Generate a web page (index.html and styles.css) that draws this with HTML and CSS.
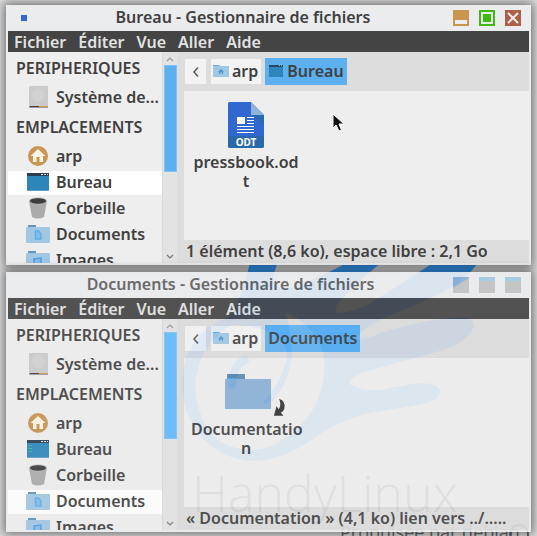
FILE: index.html
```html
<!DOCTYPE html>
<html lang="fr">
<head>
<meta charset="utf-8">
<title>Bureau - Gestionnaire de fichiers</title>
<link rel="stylesheet" href="styles.css">
</head>
<body>
<svg class="defs" aria-hidden="true">
  <symbol id="drive" viewBox="0 0 24 24">
    <rect x="3" y="1" width="19" height="22" rx="1" fill="#cbcbcb"/>
    <circle cx="12" cy="10" r="6.500" fill="#d1d1d1"/>
    <path d="M3 21h19v1a1 1 0 0 1-1 1H4a1 1 0 0 1-1-1z" fill="#9a9a9a"/>
    <path d="M4 21h9v1H4z" fill="#4a3a36"/><path d="M13 21h8v1h-8z" fill="#dc9a48"/>
  </symbol>
  <symbol id="home" viewBox="0 0 24 24">
    <circle cx="12" cy="12" r="10" fill="#c99552"/>
    <path d="M12 5l7.500 7H17v6h-3.500v-5h-3v5H7v-6H4.500z" fill="#fbf3e4"/>
  </symbol>
  <symbol id="desk" viewBox="0 0 24 24">
    <path d="M1 3h22v18H1z" fill="#2d86ba"/><path d="M1 3h22v3H1z" fill="#2b3d52"/>
    <path d="M15 4h2v1h-2zM18 4h2v1h-2zM21 4h1v1h-1z" fill="#dfeaf2"/><path d="M1 20h22v1H1z" fill="#5a9fcb"/>
  </symbol>
  <symbol id="terminal" viewBox="0 0 24 24">
    <use href="#desk"/><path d="M3 8h3v1H3zM3 11h3v1H3zM3 14h3v1H3z" fill="#2fc0a8"/>
  </symbol>
  <symbol id="bin" viewBox="0 0 24 24">
    <path d="M3 5l3 16q6 3 12 0l3-16z" fill="#aaabaa"/><ellipse cx="12" cy="5" rx="9" ry="3.500" fill="#b4b5b4"/>
    <ellipse cx="12" cy="5" rx="8" ry="2.700" fill="#3c3c3c"/>
  </symbol>
  <symbol id="folder" viewBox="0 0 24 24">
    <path d="M2 3h8v3H2z" fill="#6595bc"/><path d="M1 5h22a1 1 0 0 1 1 1v14a1 1 0 0 1-1 1H1a1 1 0 0 1-1-1V6a1 1 0 0 1 1-1z" fill="#a1c8e2"/>
  </symbol>
  <symbol id="docs" viewBox="0 0 24 24">
    <use href="#folder"/><path d="M9.500 9h3l2.500 3v5H9.500z" fill="#86bbe8" stroke="#5aaeee" stroke-width="1.500"/>
  </symbol>
  <symbol id="pics" viewBox="0 0 24 24">
    <use href="#folder"/><path d="M8 11l7-1v7H8z" fill="#86bbe8" stroke="#4c9de2" stroke-width="1.500"/>
  </symbol>
  <symbol id="homefolder" viewBox="0 0 16 14">
    <path d="M0 2h16v11H0z" fill="#a1c8e2"/><path d="M0 1h6l1 1H0z" fill="#62aee8"/>
    <path d="M8 5l3 3h-1v2H9V8.500H7V10H6V8H5z" fill="#4a92d2"/>
  </symbol>
  <symbol id="up" viewBox="0 0 10 6"><path d="M2 5l3-3 3 3" fill="none" stroke="#999" stroke-width="1.200"/></symbol>
  <symbol id="down" viewBox="0 0 10 6"><path d="M2 1l3 3 3-3" fill="none" stroke="#777" stroke-width="1.200"/></symbol>
  <symbol id="back" viewBox="0 0 10 14"><path d="M7 2.500L3 7l4 4.500" fill="none" stroke="#5c5c5c" stroke-width="1.600"/></symbol>
</svg>

<div class="desktop">
  <svg class="wallpaper" viewBox="0 0 537 536" aria-hidden="true">
    <path fill="#3a9eff" fill-rule="evenodd" d="M250 262L278 262Q272 276 274 283Q280 292 298 286Q322 276 349 262L382 262C366 275 348 291 337 305Q333 314 342 313Q358 310 374 301L430 265L478 262Q468 280 435 296L385 318Q362 328 356 339Q364 341 380 333Q425 319 462 317Q476 318 473 329Q466 343 440 351L382 367Q350 375 349 383Q356 391 380 390L412 384Q436 381 440 391Q439 401 422 404L365 414Q335 422 310 441Q281 461 250 461Q219 458 200 435Q182 412 182 382Q184 332 231 316Q244 292 250 262ZM232 325Q198 345 195 385Q197 425 222 443Q248 455 272 446Q302 430 316 404Q328 378 323 352Q315 326 285 312Q292 330 292 357Q288 385 272 401L262 404Q282 382 287 357Q286 327 232 325Z"/>
    <path fill="none" stroke="#3a9eff" stroke-width="8" stroke-linecap="round" d="M245 360Q233 365 232 385"/>
    <text class="brand" x="192" y="512">HandyLinux</text>
    <text class="tagline" x="340" y="539">Propulsée par debian</text>
    <circle cx="519" cy="534" r="9" fill="none" stroke="#666" stroke-width="2"/>
  </svg>

  <section class="shell">
    <div class="window">
      <header class="titlebar">
        <span class="pin"></span>
        <h1 class="title">Bureau - Gestionnaire de fichiers</h1>
        <div class="controls">
          <button class="ctl" aria-label="Réduire"><svg viewBox="0 0 16 16"><path fill="#c9954f" d="M0 0h16v16H0z"/><path fill="#ebecee" d="M2 10h12v4H2z"/></svg></button>
          <button class="ctl" aria-label="Agrandir"><svg viewBox="0 0 16 16"><path fill="#3fba13" d="M0 0h16v16H0z"/><path fill="#ebecee" d="M2 2h12v12H2z"/><path fill="#3fba13" d="M4 4h8v8H4z"/></svg></button>
          <button class="ctl" aria-label="Fermer"><svg viewBox="0 0 16 16"><path fill="#ad5f47" d="M0 0h16v16H0z"/><path stroke="#ebecee" stroke-width="2" d="M3 3l10 10M13 3L3 13"/></svg></button>
        </div>
      </header>
      <nav class="menubar">
        <button>Fichier</button><button>Éditer</button><button>Vue</button><button>Aller</button><button>Aide</button>
      </nav>
      <div class="body">
        <nav class="sidebar">
          <h2>PERIPHERIQUES</h2>
          <a href="#"><svg><use href="#drive"/></svg>Système de...</a>
          <h2>EMPLACEMENTS</h2>
          <a href="#"><svg><use href="#home"/></svg>arp</a>
          <a href="#" class="current"><svg><use href="#desk"/></svg>Bureau</a>
          <a href="#"><svg><use href="#bin"/></svg>Corbeille</a>
          <a href="#"><svg><use href="#docs"/></svg>Documents</a>
          <a href="#"><svg><use href="#pics"/></svg>Images</a>
        </nav>
        <div class="scroll">
          <button aria-label="Monter"><svg><use href="#up"/></svg></button>
          <div class="track"><div class="thumb"></div></div>
          <button aria-label="Descendre"><svg><use href="#down"/></svg></button>
        </div>
        <main class="content">
          <div class="toolbar">
            <button class="back" aria-label="Précédent"><svg><use href="#back"/></svg></button>
            <button class="crumb"><svg><use href="#homefolder"/></svg>arp</button>
            <button class="crumb active"><svg viewBox="0 0 16 14"><path fill="#2d86ba" d="M1 1h14v12H1z"/><path fill="#27485f" d="M1 1h14v2H1z"/><path fill="#9ac0d8" d="M11 1h1v1h-1zM13 1h1v1h-1z"/></svg>Bureau</button>
          </div>
          <div class="files">
            <figure class="file">
              <svg class="art" viewBox="0 0 50 50">
                <path fill="#3168cf" d="M8 2h22l13 13v31a2 2 0 0 1-2 2H9a2 2 0 0 1-2-2V3z"/>
                <path fill="#2a6bb0" d="M31 15h12v11z"/><path fill="#8fb3d9" d="M30 2l13 13H30z"/>
                <path fill="#2969ab" d="M7 36h36v10a2 2 0 0 1-2 2H9a2 2 0 0 1-2-2z"/>
                <path fill="#fff" d="M16 17h8v7h-8zM26 17h7v1h-7zM26 20h7v1h-7zM26 23h7v1h-7zM16 26h17v1H16zM16 29h17v1H16zM16 32h17v1H16z"/>
                <text class="badge" x="25" y="46">ODT</text>
              </svg>
              <figcaption>pressbook.od<wbr>t</figcaption>
            </figure>
          </div>
          <footer class="status">1 élément (8,6 ko), espace libre : 2,1 Go</footer>
        </main>
      </div>
    </div>
  </section>

  <section class="shell">
    <div class="window idle">
      <header class="titlebar">
        <h1 class="title">Documents - Gestionnaire de fichiers</h1>
        <div class="controls">
          <button class="ctl" aria-label="Réduire"><svg viewBox="0 0 16 16"><path fill="#c3c3c3" d="M0 0h16v16H0z"/><path fill="#8db2d6" d="M0 0h16v1L0 11z"/></svg></button>
          <button class="ctl" aria-label="Agrandir"><svg viewBox="0 0 16 16"><path fill="#c3c3c3" d="M0 0h16v16H0z"/><path fill="#a1cae3" d="M0 0h16v4H0z"/></svg></button>
          <button class="ctl" aria-label="Fermer"><svg viewBox="0 0 16 16"><path fill="#c3c3c3" d="M0 0h16v16H0z"/><path fill="#a1cae3" d="M0 0h16v4H0z"/></svg></button>
        </div>
      </header>
      <nav class="menubar">
        <button>Fichier</button><button>Éditer</button><button>Vue</button><button>Aller</button><button>Aide</button>
      </nav>
      <div class="body">
        <nav class="sidebar">
          <h2>PERIPHERIQUES</h2>
          <a href="#"><svg><use href="#drive"/></svg>Système de...</a>
          <h2>EMPLACEMENTS</h2>
          <a href="#"><svg><use href="#home"/></svg>arp</a>
          <a href="#"><svg><use href="#terminal"/></svg>Bureau</a>
          <a href="#"><svg><use href="#bin"/></svg>Corbeille</a>
          <a href="#" class="current"><svg><use href="#docs"/></svg>Documents</a>
          <a href="#"><svg><use href="#pics"/></svg>Images</a>
        </nav>
        <div class="scroll">
          <button aria-label="Monter"><svg><use href="#up"/></svg></button>
          <div class="track"><div class="thumb"></div></div>
          <button aria-label="Descendre"><svg><use href="#down"/></svg></button>
        </div>
        <main class="content">
          <div class="toolbar">
            <button class="back" aria-label="Précédent"><svg><use href="#back"/></svg></button>
            <button class="crumb"><svg><use href="#homefolder"/></svg>arp</button>
            <button class="crumb active">Documents</button>
          </div>
          <div class="files">
            <figure class="file">
              <svg class="art" viewBox="0 0 50 50">
                <path fill="#6089ae" d="M6 7h18v5H6z"/><path fill="#58a8ec" d="M7 11h9v1H7z"/>
                <path fill="#8bb0d6" d="M4 12h46v30H4z"/>
              </svg>
              <svg class="link-mark" viewBox="0 0 16 20" aria-hidden="true"><path fill="#333" d="M7 0Q15 3 13 11Q12 15 9 16L12 19.500H1L4 8.500L6.500 12Q10 8 7 0z"/></svg>
              <figcaption>Documentatio<wbr>n</figcaption>
            </figure>
          </div>
          <footer class="status">« Documentation » (4,1 ko) lien vers ../.....</footer>
        </main>
      </div>
    </div>
  </section>

  <svg class="pointer" viewBox="0 0 14 20" aria-hidden="true"><path fill="#111" stroke="#fff" d="M1 1v14l3-3 3 6 2.500-1-2.500-6h5z"/></svg>
</div>
</body>
</html>
```
FILE: styles.css
```css
* { box-sizing: border-box; }

body {
  margin: 0;
  font: 600 16px/22px "Noto Sans", sans-serif;
  color: #404040;
}

button {
  display: flex;
  align-items: center;
  justify-content: center;
  margin: 0;
  padding: 0;
  border: 0;
  background: none;
  font: inherit;
  color: inherit;
}

.defs { position: absolute; width: 0; height: 0; }

.desktop {
  position: relative;
  display: flex;
  flex-direction: column;
  gap: 7px;
  height: 100vh;
  padding: 5px 6px 0;
  overflow: hidden;
  background: #dcdcdc;
}

.wallpaper {
  position: absolute;
  left: 0;
  top: 0;
  width: 537px;
  height: 536px;
}
.brand { font: 300 50px "Open Sans", sans-serif; fill: #555; }
.tagline { font: 400 18px "Open Sans", sans-serif; fill: #666; }

.shell { position: relative; flex: none; box-shadow: 0 0 9px 2px rgba(0, 0, 0, .5); }

.window {
  display: flex;
  flex-direction: column;
  padding: 0 2px 2px;
  background: #ebecee;
}
.window.idle { opacity: .9; background: #ecedef; }

.titlebar { display: flex; align-items: center; height: 26px; padding: 0 8px 0 13px; }
.pin { width: 6px; height: 6px; margin-right: -6px; background: #3168cf; }
.title { flex: 1; margin: 0; padding: 0 0 2px 12px; font: inherit; text-align: center; }
.idle .title { padding: 0 13px 2px 0; color: #5e5e5e; }
.controls { display: flex; gap: 10px; }
.ctl, .ctl svg { width: 16px; height: 16px; }

.menubar {
  display: flex;
  gap: 12px;
  height: 21px;
  padding: 0 6px;
  background: #444;
  color: #e2e2e2;
}

.body { display: flex; height: 211px; }

.sidebar {
  width: 154px;
  overflow: hidden;
  background: #eee;
}
.sidebar h2 { margin: 0; padding: 0 8px; font: inherit; line-height: 33px; }
.sidebar a {
  display: flex;
  align-items: center;
  gap: 6px;
  height: 26px;
  padding: 0 0 2px 18px;
  border: solid transparent;
  border-width: 1px 0;
  background-clip: padding-box;
  color: inherit;
  text-decoration: none;
  white-space: nowrap;
}
.sidebar a.current { background-color: #fff; }
.sidebar svg { flex: none; width: 24px; height: 24px; }

.scroll {
  display: flex;
  flex-direction: column;
  width: 15px;
  background: #e3e3e3;
  border-left: 1px solid #dadada;
}
.scroll button { height: 13px; }
.scroll svg { width: 10px; height: 6px; }
.track { flex: 1; padding-left: 1px; }
.thumb { height: 58%; background: #5cb0f0; border: 1px solid #7fc3f6; }
.idle .thumb { background: #62baff; }

.content {
  flex: 1;
  display: flex;
  flex-direction: column;
  min-width: 0;
  padding-left: 7px;
  background: #ddd;
}
.toolbar { display: flex; align-items: center; height: 39px; padding-left: 1px; }
.back { width: 21px; height: 25px; margin-right: 5px; background: #f3f3f3; }
.back svg { width: 10px; height: 14px; }
.crumb { gap: 3px; height: 25px; margin-right: 4px; padding: 0 3px 2px 2px; background: #f3f3f3; }
.crumb.active { height: 27px; padding: 0 3px 2px; background: #5cb0f0; }
.crumb svg { width: 16px; height: 14px; }

.files { flex: 1; background: #eee; }
.file {
  position: relative;
  display: flex;
  flex-direction: column;
  align-items: center;
  width: 110px;
  margin: 9px 0 0 7px;
}
.art { width: 50px; height: 50px; }
.badge { font: 700 10px "Noto Sans", sans-serif; fill: #fff; text-anchor: middle; }
.link-mark { position: absolute; left: 82px; top: 31px; width: 14px; height: 19px; }
.file figcaption {
  width: 110px;
  margin-top: 3px;
  line-height: 19px;
  text-align: center;
}

.status { height: 23px; padding-left: 2px; white-space: nowrap; overflow: hidden; }

.pointer { position: absolute; left: 332px; top: 113px; width: 14px; height: 20px; }
```
